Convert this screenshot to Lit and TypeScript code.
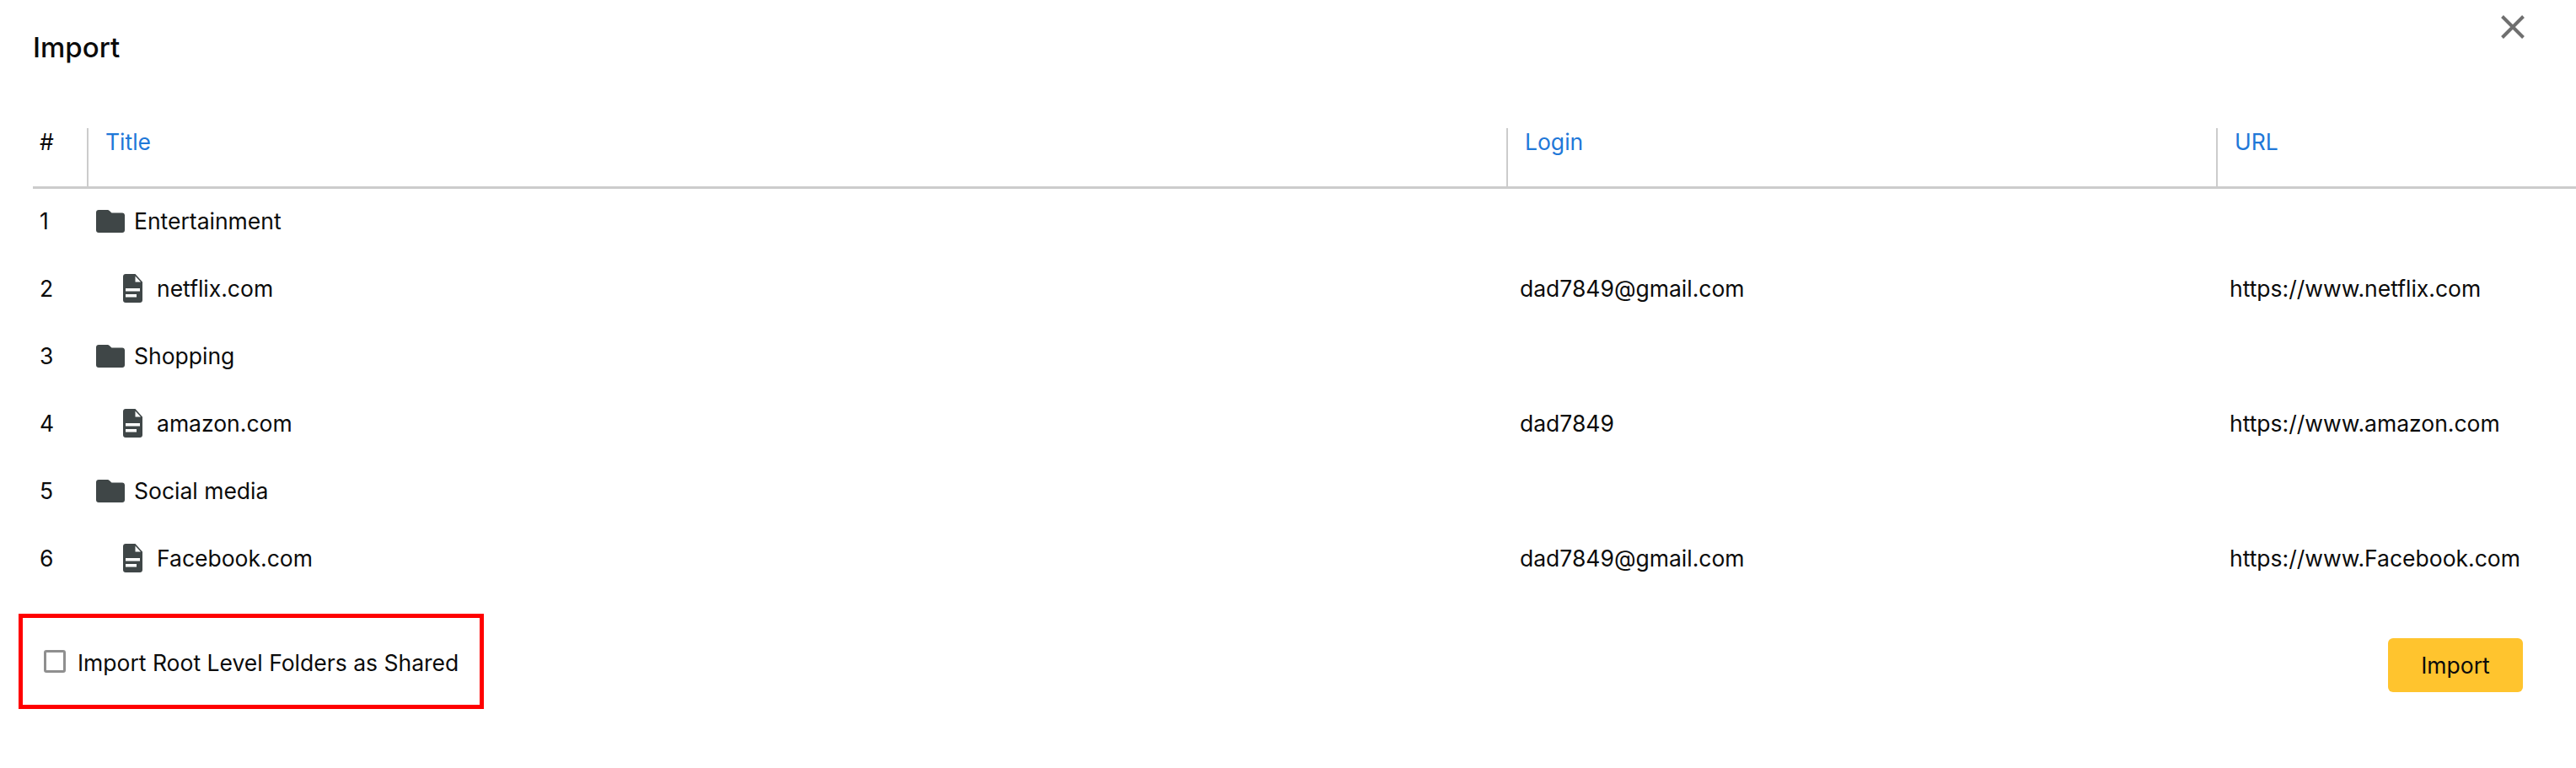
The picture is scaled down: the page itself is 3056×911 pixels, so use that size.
import { LitElement, html, css, svg } from "lit";
import { customElement } from "lit/decorators.js";

const rows = [
  { kind: "folder", name: "Entertainment", login: "", url: "" },
  { kind: "file", name: "netflix.com", login: "dad7849@gmail.com", url: "https://www.netflix.com" },
  { kind: "folder", name: "Shopping", login: "", url: "" },
  { kind: "file", name: "amazon.com", login: "dad7849", url: "https://www.amazon.com" },
  { kind: "folder", name: "Social media", login: "", url: "" },
  { kind: "file", name: "Facebook.com", login: "dad7849@gmail.com", url: "https://www.Facebook.com" },
];

const folder = svg`<svg class="folder" viewBox="0 0 34 27"><path fill="#3f4647" d="M3 0h10.5c1 0 1.700.4 2.300 1l2.700 2.600H31c1.700 0 3 1.300 3 3V24c0 1.700-1.300 3-3 3H3c-1.700 0-3-1.300-3-3V3c0-1.700 1.300-3 3-3z"/></svg>`;
const file = svg`<svg class="file" viewBox="0 0 23 34"><path fill="#3f4647" fill-rule="evenodd" d="M3 0h11.500L23 9.500V31c0 1.700-1.300 3-3 3H3c-1.700 0-3-1.300-3-3V3c0-1.700 1.300-3 3-3zM14.500 2.500V9.500H21zM3 17v3.500h17V17zM3 24v3.500h13V24z"/></svg>`;

@customElement("app-root")
export class AppRoot extends LitElement {
  static styles = css`
    :host {
      display: block;
      width: 3056px;
      height: 911px;
      background: #fff;
      color: #0b0b0b;
      font-family: Inter, sans-serif;
      font-size: 26.500px;
      overflow: hidden;
    }
    .top {
      display: flex;
      justify-content: space-between;
      padding: 0 61px 0 39px;
      height: 152px;
    }
    h1 {
      margin: 36px 0 0;
      font-size: 33px;
      line-height: 40px;
      font-weight: 500;
    }
    .close {
      width: 28px;
      height: 28px;
      margin-top: 18px;
    }
    .table {
      margin-left: 39px;
      display: grid;
      grid-template-columns: 64px 1684px 842px 1fr;
    }
    .head {
      display: contents;
    }
    .th {
      height: 69px;
      border-bottom: 3px solid #cccccc;
      padding-left: 20px;
      line-height: 33px;
      color: #1f78d8;
      border-left: 2px solid #cccccc;
    }
    .th.num {
      border-left: 0;
      color: #0b0b0b;
      padding-left: 8px;
    }
    .cell {
      height: 80px;
      padding-bottom: 4px;
      box-sizing: border-box;
      display: flex;
      align-items: center;
      white-space: nowrap;
    }
    .cell.n {
      padding-left: 8px;
    }
    .cell.t {
      gap: 11px;
      padding-left: 11px;
    }
    .cell.t.indented {
      padding-left: 43px;
      gap: 17px;
    }
    .cell.c {
      padding-left: 16px;
    }
    .folder {
      width: 34px;
      height: 27px;
      flex: none;
    }
    .file {
      width: 23px;
      height: 34px;
      flex: none;
    }
    .foot {
      display: flex;
      justify-content: space-between;
      align-items: center;
      margin-top: 24px;
      padding: 0 63px 0 22px;
    }
    .mark {
      flex: none;
      width: 552px;
      height: 113px;
      box-sizing: border-box;
      border: 5px solid #ff0000;
      display: flex;
      align-items: center;
      gap: 14px;
      padding-left: 25px;
      white-space: nowrap;
    }
    .mark span:last-child {
      margin-bottom: -2px;
    }
    .box {
      width: 26px;
      height: 27px;
      box-sizing: border-box;
      border: 3px solid #8f8f8f;
      border-radius: 3px;
      flex: none;
    }
    button {
      flex: none;
      width: 160px;
      height: 64px;
      margin-top: 9px;
      border: 0;
      border-radius: 6px;
      background: #ffc42e;
      color: #0b0b0b;
      font: inherit;
      padding: 0;
    }
  `;

  render() {
    return html`
      <div class="top">
        <h1>Import</h1>
        <svg class="close" viewBox="0 0 28 28">
          <path d="M1.500 1.500l25 25M26.500 1.500l-25 25" stroke="#6f6f6f" stroke-width="4" fill="none" />
        </svg>
      </div>
      <div class="table">
        <div class="head">
          <div class="th num">#</div>
          <div class="th">Title</div>
          <div class="th">Login</div>
          <div class="th">URL</div>
        </div>
        ${rows.map(
          (r, i) => html`
            <div class="cell n">${i + 1}</div>
            <div class="cell t ${r.kind === "file" ? "indented" : ""}">
              ${r.kind === "file" ? file : folder}<span>${r.name}</span>
            </div>
            <div class="cell c">${r.login}</div>
            <div class="cell c">${r.url}</div>
          `
        )}
      </div>
      <div class="foot">
        <label class="mark"><span class="box"></span><span>Import Root Level Folders as Shared</span></label>
        <button>Import</button>
      </div>
    `;
  }
}
